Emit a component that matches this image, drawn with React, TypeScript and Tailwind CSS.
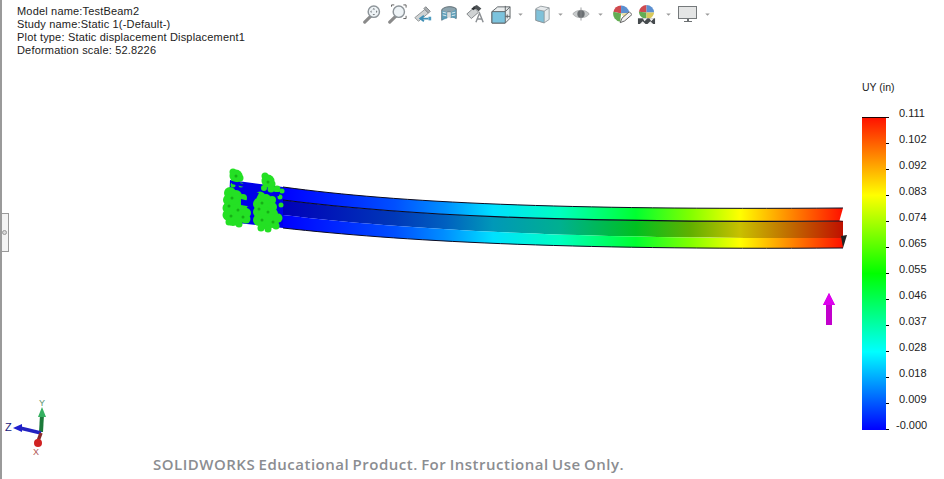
const labels = ["0.111","0.102","0.092","0.083","0.074","0.065","0.055","0.046","0.037","0.028","0.018","0.009","-0.000"];

const beamBand = (a: number[], b: number[]) =>
  `M283 ${a[0]} C400 ${a[1]} 560 ${a[2]} 843 ${a[3]} L843 ${b[3]} C560 ${b[2]} 400 ${b[1]} 283 ${b[0]} Z`;
const e0 = [187,203,210,208], e1 = [200,215,223,221], e2 = [215,229,239,238], e3 = [228,241,250,248];
const edge = (a: number[]) => `M283 ${a[0]} C400 ${a[1]} 560 ${a[2]} 843 ${a[3]}`;

const greens: [number,number,number][] = [
  [236,176,6.5],[233,172,3.5],[240,178,3.5],[268,181,6.5],[265,176,3.5],[272,184,3.5],
  [233,185,2.5],[241,185,2.5],[264,188,3],[271,189,3.5],[277,189,3.5],[282,191,2.5],
  [230,193,6],[236,196,6],[243,198,4],[229,200,6],[235,204,6],[228,208,5.5],[234,211,7],[241,207,6],[228,215,5.5],[233,219,7],[240,216,7],[246,213,5],[246,219,4.5],[229,222,3.5],[239,224,3.5],
  [260,197,5.5],[266,199,5],[272,200,4],[259,204,6],[265,206,7],[272,207,5],[259,212,6],[265,214,7],[272,214,6],[259,220,6],[265,222,7],[272,221,7],[278,218,4.5],[261,228,3.5],[268,229,3.5],[276,226,3.5],[280,197,2.5],[281,205,2.5],[246,204,3],
];
const darks: [number,number][] = [[232,198],[238,210],[231,216],[243,217],[262,203],[268,212],[262,220],[273,222],[236,176],[268,182],[229,206],[259,209]];

const Mag = ({ children }: { children?: React.ReactNode }) => (
  <svg width="20" height="20" viewBox="0 0 22 22">
    <line x1="10" y1="13" x2="3" y2="20" stroke="#8a8a8a" strokeWidth="3.4" strokeLinecap="round" />
    <circle cx="13" cy="8.500" r="6.200" fill="#eef3f6" stroke="#8d9499" strokeWidth="1.600" />
    {children}
  </svg>
);
const Caret = () => (
  <svg width="5" height="3" viewBox="0 0 6 4" className="mt-[1px]"><path d="M0 0.500H6L3 3.500Z" fill="#9a9a9a" /></svg>
);

function Toolbar() {
  return (
    <div className="flex items-center h-[22px]">
      <Mag><path d="M13 4.500l1.500 1.500h-3zM13 12.500l1.500-1.500h-3zM9 8.500l1.500-1.500v3zM17 8.500l-1.500-1.500v3z" fill="#6f7579" /></Mag>
      <div className="w-[5px]" />
      <Mag><path d="M5 3V1H8M18 1H21V4M21 13V16H18" stroke="#555" strokeWidth="1" fill="none" /></Mag>
      <div className="w-[6px]" />
      <svg width="20" height="20" viewBox="0 0 22 22">
        <path d="M2 15L13 6l4 4L6 19z" fill="#cfd2d3" stroke="#8b8f91" />
        <path d="M14 3l5 5-2 2-5-5z" fill="#a9adb0" stroke="#7e8285" />
        <path d="M9 16h8M12 13l-4 3 4 3" stroke="#3f8fb5" strokeWidth="2" fill="none" />
        <rect x="17" y="14" width="3" height="4" fill="#4d9cc0" />
      </svg>
      <div className="w-[7px]" />
      <svg width="18" height="18" viewBox="0 0 20 20">
        <path d="M2 5C6 1 14 1 18 4V15C15 13 13 13 12 14V8L8 8V14C6 14 4 15 2 17Z" fill="#8da4ae" stroke="#55636b" />
        <path d="M2 6L8 8V15L2 17ZM12 8L18 5V15L12 14Z" fill="#4f9fc0" opacity="0.7" />
        <path d="M3 8l4 1M3 11l4 1M13 9l4-1M13 12l4-1" stroke="#e8f0f3" />
        <path d="M8 8h4v6H8z" fill="#d8dcdd" />
      </svg>
      <div className="w-[7px]" />
      <svg width="20" height="20" viewBox="0 0 22 22">
        <path d="M2 11L10 4l5 5-8 7z" fill="#cfd2d3" stroke="#7d8184" />
        <path d="M9 3l4-2 5 4-3 3z" fill="#4d5255" />
        <path d="M7 5l3-2 2 2-3 2z" fill="#2f3336" />
        <path d="M12 20l4-10 4 10M14 16.500h4" stroke="#8c9094" strokeWidth="1.600" fill="none" />
      </svg>
      <div className="w-[6px]" />
      <svg width="20" height="20" viewBox="0 0 21 21">
        <path d="M1 8L7 3H20V15L15 20H1Z" fill="#e9eced" stroke="#5e6467" />
        <path d="M1 8H15V20H1Z" fill="#7cc3dd" stroke="#5e6467" />
        <path d="M15 8L20 3M15 2V8M15 13H20M17 11v4" stroke="#5e6467" fill="none" />
      </svg>
      <div className="w-[7px]" />
      <Caret />
      <div className="w-[12px]" />
      <svg width="15" height="21" viewBox="0 0 18 22">
        <path d="M1 4L7 1L17 3V17L11 21L1 18Z" fill="#e6eaec" stroke="#8b9499" />
        <path d="M1 5L11 7V21L1 18Z" fill="#7fc1d9" stroke="#8b9499" />
        <path d="M11 7L17 3" stroke="#8b9499" />
      </svg>
      <div className="w-[8px]" />
      <Caret />
      <div className="w-[9px]" />
      <svg width="18" height="18" viewBox="0 0 22 18">
        <path d="M1 9C5 3 17 3 21 9C17 15 5 15 1 9Z" fill="#c8cbcc" stroke="#a5a8a9" />
        <circle cx="11" cy="9" r="4.500" fill="#6b6f72" />
        <path d="M11 1V17" stroke="#8a8d8f" />
      </svg>
      <div className="w-[8px]" />
      <Caret />
      <div className="w-[9px]" />
      <svg width="20" height="21" viewBox="0 0 22 22">
        <path d="M10 1A9 9 0 0 0 1.500 8L10 10Z" fill="#cf4a4f" />
        <path d="M10 1A9 9 0 0 1 19 9L10 10Z" fill="#5b8fd0" />
        <path d="M1.500 8A9 9 0 0 0 9 19L10 10Z" fill="#63ad53" />
        <path d="M10 10L19 9A9 9 0 0 1 15 17Z" fill="#e9e0a0" />
        <path d="M9 20l2-5 8-7 3 3-8 7z" fill="#f3f3f3" stroke="#555" />
      </svg>
      <div className="w-[5px]" />
      <svg width="19" height="21" viewBox="0 0 20 22">
        <path d="M10 1A8 8 0 0 0 2 8L10 9Z" fill="#cf4a4f" />
        <path d="M10 1A8 8 0 0 1 18 9L10 9Z" fill="#5b8fd0" />
        <path d="M2 8A8 8 0 0 0 7 15H10V9Z" fill="#63ad53" />
        <path d="M10 9H18A8 8 0 0 1 14 15H10Z" fill="#d9c95c" />
        <rect x="1" y="15" width="18" height="6" fill="#454a4d" />
        <path d="M3 21l3-3 3 3zM11 21l3-3 3 3zM6 15l2 3 3-3zM13 15l2 3 3-3z" fill="#f2f2f2" />
      </svg>
      <div className="w-[10px]" />
      <Caret />
      <div className="w-[7px]" />
      <svg width="19" height="19" viewBox="0 0 19 19">
        <rect x="0.500" y="1.500" width="18" height="12" fill="#e4e5e5" stroke="#75797b" />
        <path d="M9 14h2v2h3v1H6v-1h3z" fill="#6d7173" />
      </svg>
      <div className="w-[8px]" />
      <Caret />
    </div>
  );
}

export default function App() {
  return (
    <div className="relative w-[944px] h-[479px] bg-white overflow-hidden border-l-2 border-[#9a9a9a] font-['Liberation_Sans',sans-serif]">
      <svg className="absolute inset-0" width="942" height="479" viewBox="2 0 942 479">
        <defs>
          <linearGradient id="bright" gradientUnits="userSpaceOnUse" x1="283" y1="0" x2="843" y2="0">
            <stop offset="0" stopColor="#0000ff" />
            <stop offset="0.2" stopColor="#0050ff" />
            <stop offset="0.29" stopColor="#0090ff" />
            <stop offset="0.375" stopColor="#00e0ff" />
            <stop offset="0.495" stopColor="#00ffc0" />
            <stop offset="0.63" stopColor="#00ff30" />
            <stop offset="0.727" stopColor="#80ff00" />
            <stop offset="0.816" stopColor="#ffff00" />
            <stop offset="0.9" stopColor="#ff9000" />
            <stop offset="1" stopColor="#ff1000" />
          </linearGradient>
          <linearGradient id="mid" gradientUnits="userSpaceOnUse" x1="283" y1="0" x2="843" y2="0">
            <stop offset="0" stopColor="#0000b8" />
            <stop offset="0.2" stopColor="#0038b8" />
            <stop offset="0.29" stopColor="#0060c0" />
            <stop offset="0.375" stopColor="#0098b8" />
            <stop offset="0.495" stopColor="#00b090" />
            <stop offset="0.63" stopColor="#00c020" />
            <stop offset="0.727" stopColor="#60b000" />
            <stop offset="0.816" stopColor="#c8c000" />
            <stop offset="0.9" stopColor="#c07000" />
            <stop offset="1" stopColor="#c01000" />
          </linearGradient>
        </defs>
        <path d="M230 180L283 187V228L228 222Z" fill="#0000e8" />
        <path d={beamBand(e0,e1)} fill="url(#bright)" />
        <path d={beamBand(e1,e2)} fill="url(#mid)" />
        <path d={beamBand(e2,e3)} fill="url(#bright)" />
        <path d={edge(e0)} stroke="#0a0a20" strokeWidth="1" fill="none" />
        <path d={edge(e1)} stroke="#0a0a20" strokeWidth="1.200" fill="none" />
        <path d={edge(e3)} stroke="#0a0a20" strokeWidth="1" fill="none" />
        <path d="M844 207L843 208L839.500 220.500L845 221Z" fill="#ffffff" />
        <path d="M841 236L847 235L843 248Z" fill="#222222" />
        {greens.map(([x,y,r],i) => <circle key={i} cx={x} cy={y} r={r} fill="#24e024" />)}
        {darks.map(([x,y],i) => <circle key={i} cx={x} cy={y} r={1.500} fill="#16b016" />)}
        <path d="M232 181l12 3v3l-12-3zM246 186l7 1v6l-7-1zM241 199l12 3v5l-12-2zM252 191l7 2-3 6-5-1zM274 192h5v4h-5z" fill="#0000e8" />
        <path d="M829 293L835 305H832V325H826V305H823Z" fill="#c200cc" />
        <path d="M829 293L835 305H823Z" fill="#dd00ee" />
        <path d="M41 432L42 415" stroke="#1c7a3a" strokeWidth="4" />
        <path d="M42 407L38 417H46Z" fill="#35b060" />
        <path d="M13 428L22 424V432Z" fill="#1f1fcf" />
        <path d="M20 428L41 433" stroke="#2323c0" strokeWidth="3.500" />
        <path d="M41 433L38 441" stroke="#8c2a2a" strokeWidth="3.500" />
        <circle cx="38" cy="443" r="4" fill="#d02222" />
        <text x="39" y="406" fontSize="9" fill="#5d9470" fontFamily="Liberation Sans">Y</text>
        <text x="5" y="431" fontSize="11" fill="#20207a" fontFamily="Liberation Sans">Z</text>
        <text x="33" y="455" fontSize="9" fill="#b05555" fontFamily="Liberation Sans">X</text>
      </svg>

      <div className="relative flex items-start">
        <div className="ml-[15px] mt-[5px] w-[300px] text-[11px] leading-[13px] tracking-[0.18px] text-[#222] whitespace-nowrap">
          <div>Model name:TestBeam2</div>
          <div>Study name:Static 1(-Default-)</div>
          <div>Plot type: Static displacement Displacement1</div>
          <div>Deformation scale: 52.8226</div>
        </div>
        <div className="ml-[45px] mt-[3px]"><Toolbar /></div>
      </div>

      <div className="absolute left-[-2px] top-[213px] w-[9px] h-[39px] bg-[#f4f4f4] border border-l-0 border-[#9a9a9a] flex items-center justify-center">
        <div className="w-[5px] h-[5px] rounded-full bg-[#d8d8d8] border border-[#999]" />
      </div>

      <div className="absolute left-[860px] top-[81px] flex flex-col">
        <div className="text-[10.500px] leading-[13px] text-[#222]">UY (in)</div>
        <div className="mt-[23px] flex">
          <div className="relative w-[24px] h-[313px] bg-[linear-gradient(to_bottom,#ff1000,#ffff00_25%,#00ff00_50%,#00ffff_75%,#0000ff)]">
            <div className="absolute left-0 top-0 w-[27px] h-px bg-[#200]" />
          </div>
          <div className="flex flex-col justify-between w-[3px] h-[313px]">
            {labels.map((l) => <div key={l} className="h-px bg-black" />)}
          </div>
          <div className="flex flex-col justify-between h-[325px] -mt-[10px] items-start">
            {labels.map((l) => (
              <div key={l} className={`h-[13px] text-[11px] leading-[13px] text-[#222] ${l.startsWith("-") ? "ml-[7px]" : "ml-[10px]"}`}>{l}</div>
            ))}
          </div>
        </div>
      </div>

      <div className="absolute left-[151px] top-[454px] text-[15px] leading-[20px] font-semibold tracking-[0.5px] [word-spacing:-1px] text-[#8b8d91] font-['Open_Sans',sans-serif] whitespace-nowrap">
        SOLIDWORKS Educational Product. For Instructional Use Only.
      </div>
    </div>
  );
}
